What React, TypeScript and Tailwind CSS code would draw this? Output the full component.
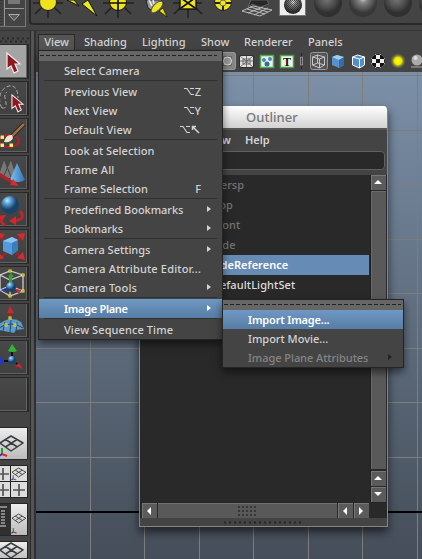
import React from "react";

const svgBase = "block shrink-0 overflow-hidden";

function Shelf() {
  return (
    <div className="flex h-[31px] shrink-0 bg-[#444] border-b border-[#353535]">
      <div className="flex h-[27px] w-[26px] shrink-0 border-r border-b border-[#777]">
        <svg width="25" height="26" className={svgBase}>
          <path d="M1 0v26" stroke="#292929" strokeDasharray="1 2" />
          <path d="M4.500 0v26M4 8.500h20" stroke="#959595" />
          <rect x="8" y="0" width="12" height="4" fill="#777" />
          <path d="M8.500 14.500h11l-5.500 6z" fill="#5c5c5c" stroke="#aaa" />
        </svg>
      </div>
      <div className="ml-[3px] h-[25px] flex-1 overflow-hidden rounded-bl border-b-2 border-l-2 border-[#292929]">
        <svg width="391" height="23" viewBox="31 0 391 23" className={svgBase}>
          <g stroke="#222" strokeWidth="1.6">
            <path d="M33 3h8M55 3h8M48 10v8M41 8l-6 6M55 8l6 6M103 3h8M125 3h9M118 10v8M111 8l-6 6M125 8l6 6M173 3h9M194 3h8M188 9v9M180 8l-6 6M196 8l6 6" />
          </g>
          <circle cx="48" cy="2" r="8.500" fill="#eee31d" stroke="#222" />
          <path d="M67 0l12 6-5-6zM82 4l6-4 9 16z" fill="#eee91e" stroke="#111" />
          <circle cx="118" cy="2" r="8.500" fill="#eee31d" stroke="#111" />
          <path d="M118-5v15M110 3h16" stroke="#111" strokeWidth="1.7" />
          <path d="M146 0h15l3 3-8 10-8-5z" fill="#999" stroke="#222" />
          <path d="M149 0l3 6M153 0l1 4" stroke="#eee" strokeWidth="1.500" />
          <ellipse cx="157" cy="7" rx="7.500" ry="3.500" transform="rotate(-45 157 7)" fill="#ede521" stroke="#555" />
          <path d="M159 11l4-3 4 9z" fill="#e8dc00" stroke="#111" strokeWidth=".7" />
          <rect x="180" y="-8" width="16" height="17" fill="#eee323" stroke="#111" strokeWidth="1.400" />
          <path d="M181 8L188 3l7 5M181-2l7 5 7-5" fill="none" stroke="#111" strokeWidth="1.8" />
          <circle cx="223" cy="2" r="8.500" fill="#eee323" stroke="#222" />
          <path d="M223-5v15M215 3h16" stroke="#222" strokeWidth="2" />
          <circle cx="223" cy="3" r="3" fill="#eee323" stroke="#444" strokeWidth=".7" />
          <path d="M242 11l11-5 19 4-12 6zM247 9l18 5M250 7l18 5M248 13l15-6M254 15l14-7" fill="none" stroke="#bbb" />
          <path d="M251 0h16l2 4-9 3-8-3-4 3z" fill="#272727" stroke="#888" strokeWidth=".5" />
        </svg>
      </div>
    </div>
  );
}

function MaterialBalls() {
  return (
    <svg width="144" height="20" viewBox="278 0 144 20" className="absolute top-0 left-[278px] overflow-hidden">
      <defs>
        <radialGradient id="ball" cx=".45" cy=".35"><stop stopColor="#777" /><stop offset=".6" stopColor="#505050" /><stop offset="1" stopColor="#303030" /></radialGradient>
        <radialGradient id="shiny" cx=".5" cy=".35"><stop stopColor="#fff" /><stop offset=".3" stopColor="#999" /><stop offset="1" stopColor="#333" /></radialGradient>
        <pattern id="mesh" width="2" height="2" patternUnits="userSpaceOnUse"><path d="M0 0h1v1H0zM1 1h1v1H1z" fill="#222" /></pattern>
      </defs>
      <path d="M279.500-1V15.500h26V-1" fill="#eee" stroke="#777" />
      <circle cx="293" cy="5" r="9" fill="url(#shiny)" />
      <circle cx="293" cy="5" r="9" fill="url(#mesh)" opacity=".65" />
      <circle cx="328" cy="3" r="14" fill="url(#ball)" />
      <circle cx="363" cy="3" r="14" fill="url(#shiny)" opacity=".75" />
      <circle cx="398" cy="3" r="14" fill="url(#ball)" />
      <circle cx="433" cy="3" r="14" fill="url(#ball)" />
    </svg>
  );
}

function Cursor() {
  return <path d="M7 8v16l4-3 3 7 4-2-3-7h5z" fill="#8d1820" stroke="#f5eeee" strokeWidth="1.2" />;
}

const toolArt: React.ReactNode[] = [
  <Cursor />,
  <>
    <path d="M2 26C-3 18 0 6 9 4c7-1 9 5 9 12M2 26c6 1 4-5 3-10q-1-4 2-6" fill="none" stroke="#aaa" strokeDasharray="4 2" />
    <g transform="translate(6 6) scale(.85)"><Cursor /></g>
  </>,
  <>
    <ellipse cx="9" cy="22" rx="10" ry="6" fill="none" stroke="#b3202b" strokeWidth="2" />
    <path d="M11 18L24 5" stroke="#201915" strokeWidth="4" /><path d="M11 18L24 5" stroke="#9a7048" strokeWidth="2.500" />
    <path d="M4 23q2-8 8-7l1 3q-2 5-9 4" fill="#eee7ce" />
    {[[2, 18], [2, 26], [11, 26]].map(([x, y]) => <rect key={`${x}-${y}`} x={x - 1} y={y - 1} width="2.500" height="2.500" fill="#eee" stroke="#f6ed43" />)}
  </>,
  <>
    <path d="M-2 20L4 3l7 18M3 22L11 3l6 19" fill="#777" stroke="#444" />
    <path d="M10 24L17 7l8 17q-7 4-15 0" fill="url(#blue)" />
    <path d="M-1 18l13 8" stroke="#b7202b" strokeWidth="3" /><path d="M10 29l3-6 6 7z" fill="#d22b33" />
  </>,
  <>
    <circle cx="10" cy="12" r="9" fill="url(#blueball)" />
    <path d="M0 25q3 8 6 7M20 18q7 8-6 10" fill="none" stroke="#c0242e" strokeWidth="3" /><path d="M-1 23l7-1-4 6zM9 28l7-5v9z" fill="#d22630" />
  </>,
  <>
    <path d="M0 6l21 22M23 5L1 28" stroke="#aa1f29" strokeWidth="2" />
    <path d="M17 4l8-1-2 8zM17 28l8 2-2-8zM-1 3l6 1-4 5zM-2 22l6 6-6 2z" fill="#d52832" />
    <path d="M3 11l9-4 6 3v10l-6 5-9-4z" fill="#559bdc" /><path d="M3 11l9-4 6 3-6 3z" fill="#8bc2f5" /><path d="M12 13l6-3v10l-6 5z" fill="#397eb9" />
  </>,
  <>
    <path d="M0 8l10-4 13 4-13 5zM0 8v15l10 6 13-5V8M10 13v16M0 23l10-4 13 5" fill="none" stroke="#ccc" strokeWidth="1.3" />
    <circle cx="11" cy="20" r="5" fill="url(#blueball)" /><path d="M9 15h3V10h2l-3-4-3 4h1z" fill="#25aa2e" /><path d="M1 23l5-2v5z" fill="#2438c3" /><path d="M15 22l6 1-2 4z" fill="#d32732" />
    {[[10, 4], [23, 8], [23, 24], [10, 29]].map(([x, y]) => <rect key={`${x}-${y}`} x={x - 1} y={y - 1} width="2" height="2" fill="#222" stroke="#f6ed43" />)}
  </>,
  <>
    <path d="M-1 20q12-9 22-2l3 7-8 1-2 3-15-3z" fill="#5c9ccc" /><path d="M-1 24q12-8 24 0M5 18l-2 9M11 16l-1 13M17 18l-1 10" fill="none" stroke="#244c6b" />
    <path d="M10 14V6" stroke="#ac2029" strokeWidth="2" /><path d="M7 9l3-7 4 7z" fill="#cf252e" />
    {[[10, 14], [6, 21], [15, 21]].map(([x, y]) => <rect key={`${x}-${y}`} x={x - 1} y={y - 1} width="2" height="2" fill="#222" stroke="#f6ed43" />)}
  </>,
  <>
    <path d="M12 18V9M8 20L2 20M16 22l4 4" stroke="#111" strokeWidth="2" /><circle cx="12" cy="19" r="4" fill="url(#blueball)" />
    <path d="M8 10l4-7 5 7q-4 2-9 0" fill="#32b335" /><path d="M0 16l4 2v4l-4 2z" fill="#2639bd" /><path d="M15 25l4-3 4 6z" fill="#ce2530" />
  </>,
  null,
];

function GridMark() {
  return <path d="M0 12L11 5l12 7-12 8zM5.500 8.500l12 7.500M5.500 16L17 8.500" fill="none" stroke="#393d3d" strokeWidth="1.500" strokeLinejoin="round" />;
}
function Axes() {
  return <><path d="M2 23v-6" stroke="#21a12b" strokeWidth="2" /><path d="M2 23l5 2" stroke="#e12626" strokeWidth="2" /><path d="M2 23l-3 2" stroke="#2434d7" strokeWidth="2" /></>;
}

function Toolbox() {
  return (
    <aside className="relative flex w-9 shrink-0 flex-col border-r-2 border-[#303030] bg-[#444]">
      <svg width="0" height="0" className="absolute"><defs><linearGradient id="blue"><stop stopColor="#84c3f0" /><stop offset="1" stopColor="#2c73b5" /></linearGradient><radialGradient id="blueball" cx=".35" cy=".25"><stop stopColor="#c5e9ff" /><stop offset=".35" stopColor="#63a9df" /><stop offset="1" stopColor="#17436b" /></radialGradient></defs></svg>
      <svg width="30" height="13" className={svgBase}><path d="M2 7.500h28M0 10.500h28" stroke="#2a2a2a" strokeWidth="2" strokeDasharray="2 3" /></svg>
      <div className="flex flex-col gap-[2px]">
        {toolArt.map((art, i) => (
          <div key={i} className={"h-[35px] w-[29px] border-y border-r-2 border-[#292929] shadow-[inset_-1px_-1px_#626262] " + (i === 0 ? "bg-[#a4a4a4]" : "bg-gradient-to-b from-[#484848] to-[#404040]")}>
            <svg width="28" height="33" viewBox="0 0 28 33" className={svgBase}>{art}</svg>
          </div>
        ))}
      </div>
      <div className="mt-[15px] flex flex-col gap-[5px]">
        <div className="h-[33px] w-7 border border-l-0 border-[#252525] bg-gradient-to-b from-[#eee] to-[#bbb]"><svg width="27" height="31" className={svgBase}><g transform="translate(0 3)"><GridMark /><Axes /></g></svg></div>
        <div className="h-[33px] w-7 border border-l-0 border-[#252525] bg-[#ddd]"><svg width="27" height="31" className={svgBase}><path d="M10.500 0v31M0 15.500h27" stroke="#222" /><path d="M3 2v12M0 8h9M3 18v12M0 24h9M19 18v12M13 24h12" stroke="#555" strokeWidth="1.7" /><g transform="translate(12 -1) scale(.6)"><GridMark /><Axes /></g></svg></div>
        <div className="h-[33px] w-7 border border-l-0 border-[#252525] bg-gradient-to-b from-[#eee] to-[#bbb]"><svg width="27" height="31" className={svgBase}><path d="M0 0h11v31H0z" fill="#303030" /><path d="M0 3h7M1 7h4M1 10h4M1 13h4M1 16h4M1 19h4M0 22h6" stroke="#ddd" /><g transform="translate(12 7) scale(.6)"><GridMark /></g><g transform="translate(12 13) scale(.65)"><Axes /></g></svg></div>
        <div className="h-[20px] w-7 border border-l-0 border-[#252525] bg-gradient-to-b from-[#eee] to-[#bbb]"><svg width="27" height="18" className={svgBase}><g transform="translate(0 -4)"><GridMark /></g><path d="M0 17h27" stroke="#222" strokeWidth="2" /></svg></div>
      </div>
      <div className="absolute top-0 right-0 h-full w-1 border-l border-[#292929] bg-[#555]" />
    </aside>
  );
}

function PanelIcons() {
  return (
    <svg width="386" height="21" viewBox="36 51 386 21" className={svgBase}>
      <defs>
        <radialGradient id="lamp"><stop stopColor="#ff0" /><stop offset=".45" stopColor="#eee900" /><stop offset="1" stopColor="#666" stopOpacity="0" /></radialGradient>
        <clipPath id="disc"><circle cx="378" cy="61" r="7" /></clipPath>
        <pattern id="checks" x="376" y="59" width="8" height="8" patternUnits="userSpaceOnUse"><path d="M0 0h4v4H0zM4 4h4v4H4z" fill="#111" /></pattern>
      </defs>
      <rect x="218.500" y="52.500" width="17" height="17" rx="2" fill="#858585" stroke="#999" />
      <rect x="223.500" y="56.500" width="8" height="9" fill="#aaa" stroke="#666" /><circle cx="227.500" cy="61" r="4" fill="#999" stroke="#ddd" />
      <path d="M239.500 55.500h14v12h-14z" fill="#e0e0dc" stroke="#303030" /><path d="M240 56l13 11M253 56l-13 11M240 61h13M246.500 56v11M243 59h7v5h-7z" fill="none" stroke="#555" strokeWidth=".8" />
      <path d="M260.500 55.500h13v12h-13z" fill="#e8f1f5" stroke="#4bab45" strokeWidth="1.500" /><circle cx="264" cy="60" r="2" fill="#4789b4" /><circle cx="270" cy="59" r="2" fill="#4789b4" /><circle cx="267" cy="64" r="2.500" fill="#316d96" />
      <path d="M280.500 55.500h13v12h-13z" fill="#f4f4ee" stroke="#48a340" strokeWidth="1.500" /><text x="287" y="65.500" textAnchor="middle" className="font-['Liberation_Serif',serif] text-[12px] font-bold fill-[#111]">T</text>
      <path d="M301.500 53v16" stroke="#222" /><path d="M300.500 57h2v8h-2z" fill="#444" stroke="#aaa" strokeWidth=".7" />
      <rect x="310.500" y="52.500" width="17" height="17" rx="2" fill="#555" stroke="#989898" />
      <path d="M312.500 57l5-2 7 2v8l-5 3-7-3zM312.500 57l7 2 5-2M319.500 59v9M317.500 55v8l7 2M317.500 63l-5 2" fill="none" stroke="#c4c8c8" strokeWidth="1" />
      <path d="M332 57l5-2 7 2v8l-5 3-7-3z" fill="#5692d0" /><path d="M332 57l5-2 7 2-5 3z" fill="#a5cbee" /><path d="M339 60l5-3v8l-5 3z" fill="#356da9" />
      <path d="M352.500 57l5-2 7 2v8l-5 3-7-3z" fill="#4f8fce" stroke="#fff" /><path d="M352.500 57l7 2 5-2M359.500 59v9" fill="none" stroke="#fff" />
      <g clipPath="url(#disc)"><path d="M370 53h16v16h-16z" fill="#eee" /><path d="M370 53h16v16h-16z" fill="url(#checks)" /></g>
      <circle cx="398" cy="61" r="8" fill="url(#lamp)" /><circle cx="417" cy="60" r="5.500" fill="#aaa" /><circle cx="415.500" cy="58" r="2" fill="#ddd" /><path d="M411 67h11" stroke="#777" strokeWidth="2" />
    </svg>
  );
}

function Viewport() {
  const xs = [90.5, 144.5, 199.5, 253.5, 308.5, 362.5, 417.5];
  const ys = [75.5, 130.5, 185.5, 239.5, 293.5, 348.5, 402.5, 457.5];
  return (
    <div className="flex-1 bg-gradient-to-b from-[#7c90a8] to-[#454e59]">
      <svg width="386" height="487" viewBox="36 72 386 487" className={svgBase}>
        {xs.map((x) => <path key={x} d={`M${x} 72v487`} stroke="#7e7d7c" />)}
        {ys.map((y) => <path key={y} d={`M36 ${y}h386`} stroke="#7e7d7c" />)}
        <path d="M36 512h386" stroke="#000" strokeWidth="2" />
      </svg>
    </div>
  );
}

type Item = { label: string; key?: string; home?: boolean; sub?: boolean; active?: boolean; disabled?: boolean; track: string };
const viewGroups: Item[][] = [
  [{ label: "Select Camera", track: "tracking-[0.05px]" }],
  [{ label: "Previous View", key: "Z", track: "tracking-[0.05px]" }, { label: "Next View", key: "Y", track: "tracking-[0.12px]" }, { label: "Default View", home: true, track: "tracking-[0.12px]" }],
  [{ label: "Look at Selection", track: "tracking-[0.05px]" }, { label: "Frame All", track: "tracking-[0.12px]" }, { label: "Frame Selection", key: "F", track: "tracking-[0px]" }],
  [{ label: "Predefined Bookmarks", sub: true, track: "tracking-[-0.03px]" }, { label: "Bookmarks", sub: true, track: "tracking-[-0.06px]" }],
  [{ label: "Camera Settings", sub: true, track: "tracking-[0px]" }, { label: "Camera Attribute Editor...", track: "tracking-[0.17px]" }, { label: "Camera Tools", sub: true, track: "tracking-[0.2px]" }],
  [{ label: "Image Plane", sub: true, active: true, track: "tracking-[-0.3px]" }],
  [{ label: "View Sequence Time", track: "tracking-[0.1px]" }],
];
const imageItems: Item[] = [
  { label: "Import Image...", active: true, track: "tracking-[-0.16px]" },
  { label: "Import Movie...", track: "tracking-[0px]" },
  { label: "Image Plane Attributes", sub: true, disabled: true, track: "tracking-[-0.05px]" },
];

function MenuRow({ item }: { item: Item }) {
  const colour = item.active ? "bg-gradient-to-b from-[#6f98c2] to-[#577da5] text-white font-semibold" : item.disabled ? "text-[#858585]" : "text-[#d3d3d3]";
  return (
    <div className={"flex h-[19px] items-center pl-[25px] whitespace-nowrap " + colour}>
      <span className={"pt-[2px] " + item.track}>{item.label}</span>
      <span className="ml-auto flex items-center">
        {(item.home || item.key === "Z" || item.key === "Y") && <svg width="10" height="9" className="mr-[1px]"><path d="M0 1.500h3l4 6h3M6 1.500h4" stroke="currentColor" fill="none" strokeWidth="1.100" /></svg>}
        {item.home && <svg width="10" height="9" className="mr-[21px]"><path d="M2 2l6 6M1.500 5V1.500H5" stroke="currentColor" fill="none" strokeWidth="1.500" /></svg>}
        {item.key && <span className="mr-[21px] pt-[2px]">{item.key}</span>}
        {item.sub && <svg width="4" height="6" className="mr-[11px] mb-[2px]"><path d="M0 0l4 3-4 3z" fill={item.disabled ? "#222" : "currentColor"} /></svg>}
      </span>
    </div>
  );
}

function TearOff() {
  return <div className="h-[10px] bg-[#666] pt-[4px]"><svg width="178" height="1" className="block"><path d="M1 .5h177" stroke="#222" strokeDasharray="4 2" /></svg></div>;
}

function ViewMenu() {
  return (
    <div className="absolute top-[50px] left-[38px] h-[290px] w-[185px] border border-[#252525] bg-[#444] shadow-[0_4px_8px_#0008]">
      <TearOff />
      {viewGroups.map((group, i) => (
        <React.Fragment key={i}>
          {i > 0 && <div className="mx-[5px] h-[2px] border-t border-[#303030]" />}
          {group.map((item) => <MenuRow key={item.label} item={item} />)}
        </React.Fragment>
      ))}
    </div>
  );
}

function ImageMenu() {
  return (
    <div className="absolute top-[299px] left-[222px] h-[69px] w-[182px] border border-[#252525] bg-[#444] shadow-[0_4px_8px_#0008]">
      <TearOff />
      {imageItems.map((item) => <MenuRow key={item.label} item={item} />)}
    </div>
  );
}

function ArrowButton({ d }: { d: string }) {
  return <div className="size-[15px] shrink-0 border-t border-l border-[#777] bg-[#5b5b5b]"><svg width="14" height="14" className="block"><path d={d} fill="#fff" /></svg></div>;
}
const up = "M2 8l4-4 4 4z";
const left = "M8 3L4 7l4 4z";

function Outliner() {
  return (
    <div className="absolute top-[106px] left-[139px] flex h-[421px] w-[249px] flex-col overflow-hidden rounded-t border-x border-b border-[#858585] bg-[#444] shadow-[0_5px_10px_#0009]">
      <div className="flex h-[22px] shrink-0 items-center bg-gradient-to-b from-white to-[#d2d2d2] pt-[2px] pl-[106px] text-[13px] tracking-[0.05px] text-[#777]">Outliner</div>
      <div className="flex h-[23px] shrink-0 items-center border-t-2 border-[#555] pl-[62px] font-semibold"><span className="w-[43px]">Show</span><span>Help</span></div>
      <div className="mx-[2px] h-[19px] shrink-0 rounded-sm border border-[#606060] bg-[#292929]" />
      <div className="mt-[5px] flex h-[327px] shrink-0 bg-[#292929] pr-[1px]">
        <div className="flex-1 text-[#747474]">
          <div className="h-5 pl-[74px] leading-5">persp</div>
          <div className="h-5 pl-[75px] leading-5">top</div>
          <div className="h-5 pl-[74px] leading-5">front</div>
          <div className="h-5 pl-[74px] leading-5">side</div>
          <div className="mr-px h-5 bg-[#668bb4] pl-[72px] leading-5 font-semibold tracking-[0.03px] text-white">sideReference</div>
          <div className="h-5 pl-[73px] leading-5 tracking-[0.1px] text-[#ddd]">defaultLightSet</div>
        </div>
        <div className="flex w-4 flex-col gap-[1px] border-l border-[#202020]">
          <ArrowButton d={up} />
          <div className="mb-px flex-1 border-t border-l border-[#6b6b6b] bg-[#595959]" />
          <ArrowButton d={up} />
          <ArrowButton d="M2 4h8L6 8z" />
        </div>
      </div>
      <div className="flex h-4 shrink-0 gap-[1px] border-t border-[#252525] bg-[#292929] pl-[2px]">
        <ArrowButton d={left} />
        <div className="flex flex-1 items-center justify-center border-t border-[#707070] bg-[#595959]">
          <svg width="20" height="11">{[1, 5, 9].map((y) => <path key={y} d={`M0 ${y}h20`} stroke="#363636" strokeWidth="2" strokeDasharray="2 2" />)}</svg>
        </div>
        <ArrowButton d={left} /><ArrowButton d="M4 3l4 4-4 4z" /><div className="w-[17px] shrink-0" />
      </div>
      <div className="flex flex-1 items-center justify-center"><svg width="79" height="3"><path d="M0 1.500h79" stroke="#252525" strokeWidth="2" strokeDasharray="2 3" /></svg></div>
    </div>
  );
}

export default function App() {
  return (
    <div className="relative flex h-[559px] w-[422px] flex-col overflow-hidden bg-[#444] font-['Noto_Sans','Open_Sans',sans-serif] text-[11px] font-medium text-[#d3d3d3]">
      <Shelf />
      <MaterialBalls />
      <div className="flex min-h-0 flex-1">
        <Toolbox />
        <main className="flex min-w-0 flex-1 flex-col">
          <nav className="flex h-5 shrink-0 items-center pt-[2px] pl-[2px]">
            <div className="flex h-[17px] w-[37px] items-center justify-center border border-[#292929] bg-[#555]">View</div>
            <span className="ml-[9px] w-[58px]">Shading</span><span className="w-[59px]">Lighting</span><span className="w-[43px]">Show</span><span className="w-[64px]">Renderer</span><span>Panels</span>
          </nav>
          <PanelIcons />
          <Viewport />
        </main>
      </div>
      <Outliner />
      <ViewMenu />
      <ImageMenu />
    </div>
  );
}
